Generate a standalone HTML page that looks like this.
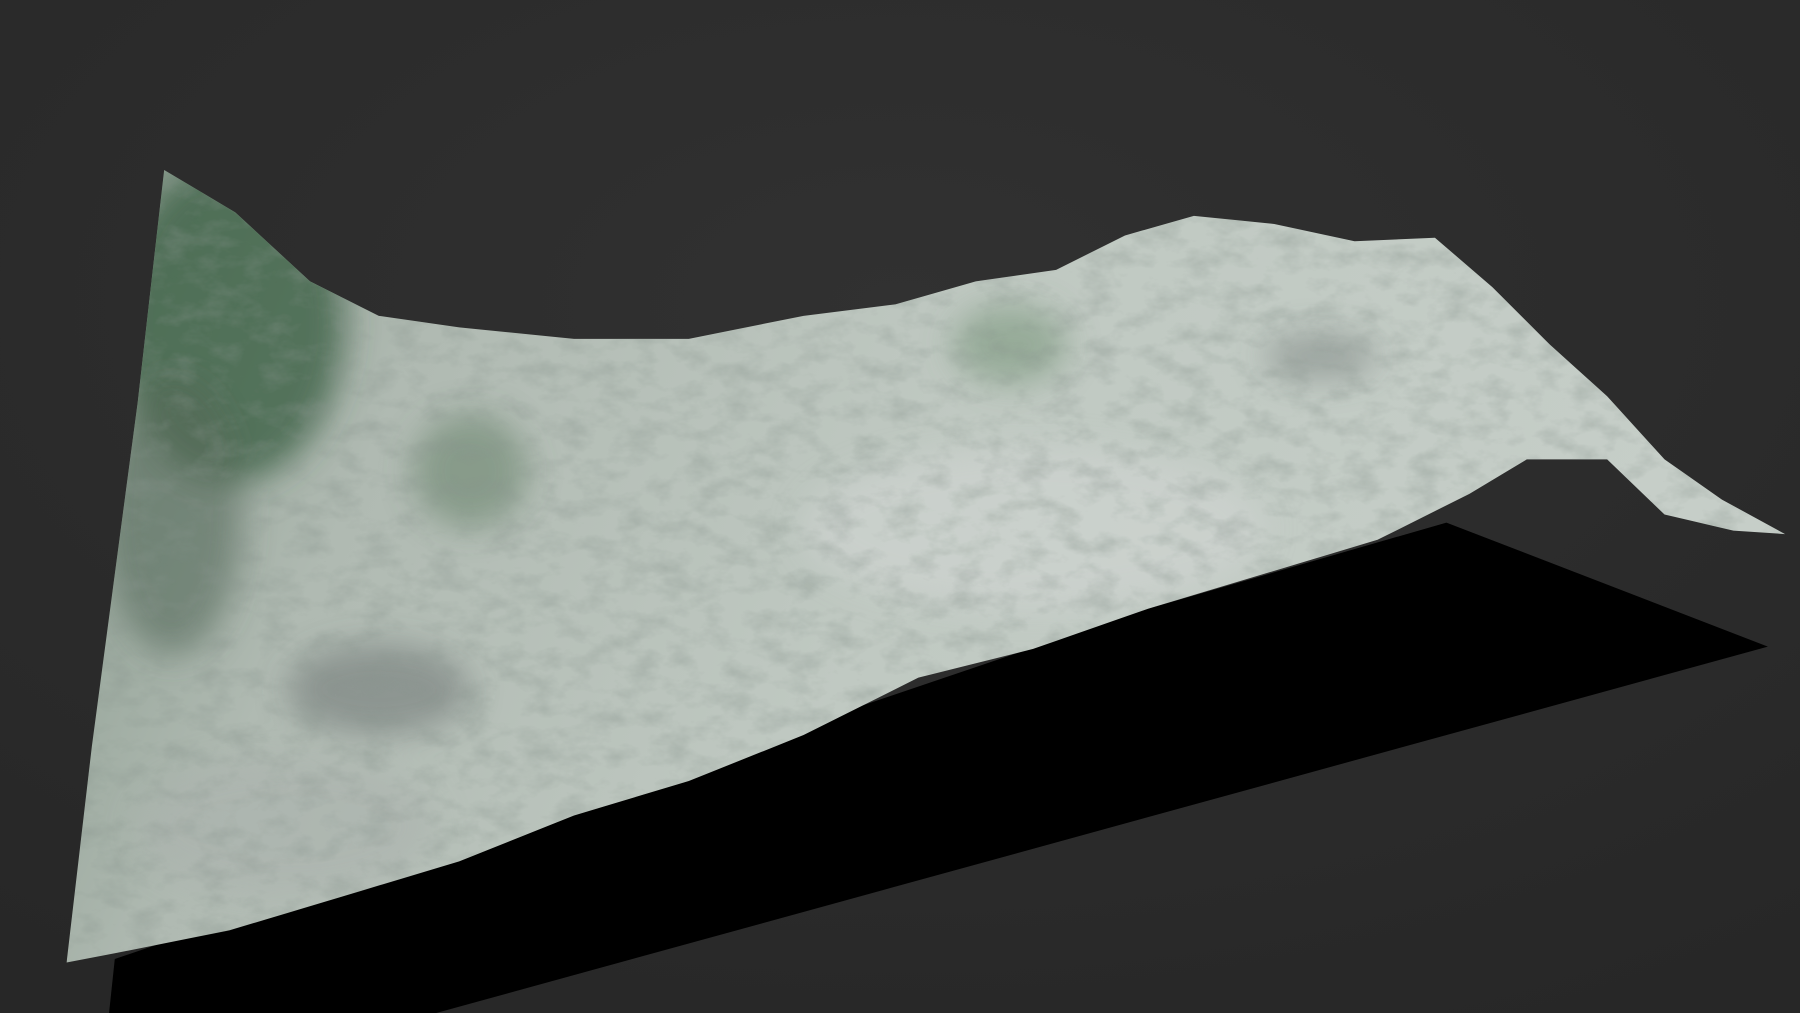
<!DOCTYPE html>
<html><head><meta charset="utf-8"><style>
html,body{margin:0;padding:0;width:1800px;height:1013px;overflow:hidden;background:#2d2d2d}
svg{display:block}
</style></head><body>
<svg width="1800" height="1013" viewBox="0 0 1568 882" preserveAspectRatio="none" xmlns="http://www.w3.org/2000/svg">
<defs>
<radialGradient id="bg" cx="50%" cy="30%" r="80%"><stop offset="0" stop-color="#313131"/><stop offset="1" stop-color="#272727"/></radialGradient>
<linearGradient id="tg" x1="0" y1="0" x2="1" y2="0.25">
<stop offset="0" stop-color="#5a7560"/>
<stop offset="0.12" stop-color="#8c9d90"/>
<stop offset="0.3" stop-color="#b0bab2"/>
<stop offset="0.6" stop-color="#c0c9c2"/>
<stop offset="1" stop-color="#c6cec8"/>
</linearGradient>
<clipPath id="tc"><path d="M143,148 L205,185 L270,245 L330,275 L400,285 L500,295 L600,295 L700,275 L780,265 L850,245 L920,235 L980,205 L1040,188 L1110,195 L1180,210 L1250,207 L1300,250 L1350,300 L1400,345 L1450,400 L1500,435 L1555,465 L1510,462 L1450,448 L1400,400 L1330,400 L1280,430 L1200,470 L1100,500 L1000,530 L900,565 L800,590 L700,640 L600,680 L500,710 L400,750 L300,780 L200,810 L100,830 L58,838 L80,650 L100,500 L120,350 Z"/></clipPath>
<filter id="bl"><feGaussianBlur stdDeviation="14"/></filter>
<filter id="noise" x="0" y="0" width="100%" height="100%">
<feTurbulence type="fractalNoise" baseFrequency="0.035 0.06" numOctaves="4" seed="3"/>
<feColorMatrix type="matrix" values="0 0 0 0 0.25  0 0 0 0 0.3  0 0 0 0 0.27  0 0 0 -2.2 1.25"/>
</filter>
</defs>
<rect width="1568" height="882" fill="url(#bg)"/>
<polygon points="100,835 1000,530 1260,455 1540,563 380,882 95,882" fill="#000"/>
<g clip-path="url(#tc)">
<rect width="1568" height="882" fill="url(#tg)"/>
<g filter="url(#bl)">
<ellipse cx="200" cy="280" rx="100" ry="140" fill="#3f6347" opacity="0.8"/>
<ellipse cx="150" cy="450" rx="60" ry="120" fill="#566b5a" opacity="0.6"/>
<ellipse cx="410" cy="410" rx="50" ry="50" fill="#5d7a60" opacity="0.5"/>
<ellipse cx="880" cy="300" rx="50" ry="35" fill="#6e8f72" opacity="0.5"/>
<ellipse cx="330" cy="600" rx="80" ry="40" fill="#5e6464" opacity="0.45"/>
<ellipse cx="250" cy="720" rx="130" ry="60" fill="#aab2ad" opacity="0.6"/>
<ellipse cx="1150" cy="310" rx="50" ry="20" fill="#6d7470" opacity="0.45"/>
<ellipse cx="900" cy="460" rx="200" ry="70" fill="#d0d6d2" opacity="0.6"/>
</g>
<rect width="1568" height="882" filter="url(#noise)" opacity="0.35"/>
</g>
</svg>
</body></html>
